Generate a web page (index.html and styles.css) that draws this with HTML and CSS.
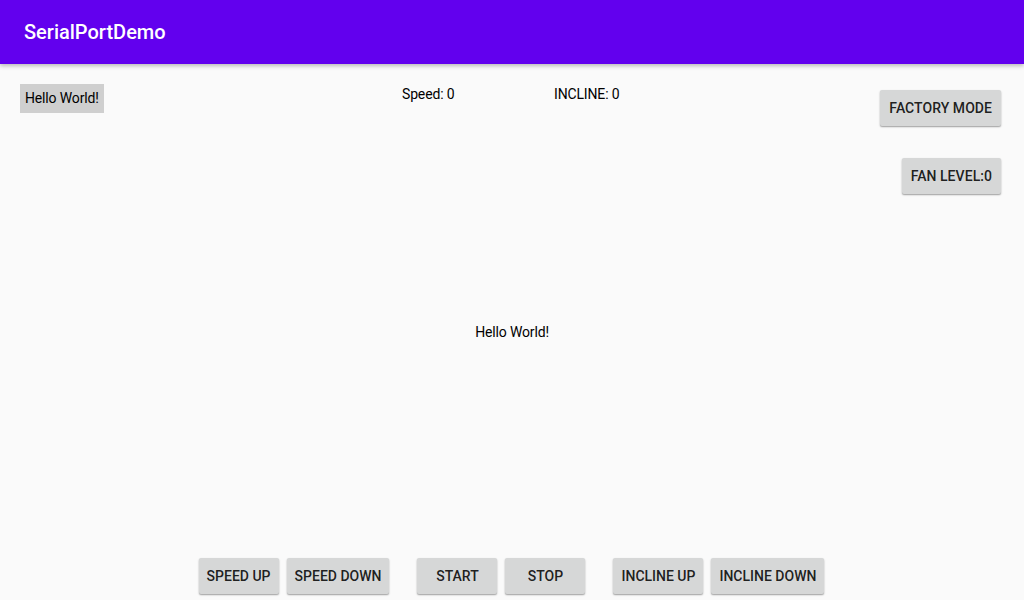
FILE: index.html
```html
<!DOCTYPE html>
<html>
<head>
<meta charset="utf-8">
<link rel="stylesheet" href="styles.css">
</head>
<body>
<header class="toolbar"><span class="title">SerialPortDemo</span></header>
<main class="content">
  <div class="top">
    <div class="hello-box">Hello World!</div>
    <div class="stat">Speed: 0</div>
    <div class="stat">INCLINE: 0</div>
    <div class="side">
      <button class="btn btn-wide">Factory Mode</button>
      <button class="btn btn-wide">Fan Level:0</button>
    </div>
  </div>
  <div class="center-text">Hello World!</div>
  <div class="bottom">
    <div class="group">
      <button class="btn">Speed Up</button>
      <button class="btn">Speed Down</button>
    </div>
    <div class="group">
      <button class="btn">Start</button>
      <button class="btn">Stop</button>
    </div>
    <div class="group">
      <button class="btn">Incline Up</button>
      <button class="btn">Incline Down</button>
    </div>
  </div>
</main>
</body>
</html>
```
FILE: styles.css
```css
* { box-sizing: border-box; }
html, body { margin: 0; padding: 0; }
body {
  width: 1024px;
  height: 600px;
  overflow: hidden;
  background: #fafafa;
  font-family: Roboto, "Liberation Sans", sans-serif;
  font-size: 14px;
  color: #000;
  display: flex;
  flex-direction: column;
}
.toolbar {
  height: 64px;
  flex: none;
  background: #6200ee;
  display: flex;
  align-items: center;
  padding-left: 24px;
  box-shadow: 0 2px 4px rgba(0,0,0,0.25);
  position: relative;
  z-index: 1;
}
.title {
  color: #fff;
  font-size: 20px;
  font-weight: 500;
  line-height: 1;
}
.content {
  flex: 1;
  display: grid;
  grid-template: 1fr / 1fr;
}
.content > * { grid-area: 1 / 1; }
.top {
  align-self: start;
  display: grid;
  grid-template-columns: 382px 152px 1fr auto;
  align-items: start;
  padding: 20px 23px 0 20px;
}
.hello-box,
.stat,
.center-text {
  letter-spacing: -0.15px;
}
.hello-box {
  justify-self: start;
  background: #cfcfcf;
  padding: 5px 5px;
  line-height: 19px;
  height: 29px;
}
.stat {
  line-height: 20px;
}
.side {
  display: flex;
  flex-direction: column;
  align-items: flex-end;
  gap: 32px;
  margin-top: 6px;
}
.btn {
  font-family: Roboto, "Liberation Sans", sans-serif;
  font-size: 14px;
  font-weight: 500;
  text-transform: uppercase;
  color: rgba(0,0,0,0.87);
  background: #d6d7d7;
  border: none;
  border-radius: 2px;
  height: 36px;
  min-width: 80px;
  padding: 0 8px;
  box-shadow: 0 1px 2px rgba(0,0,0,0.28), 0 1px 1px rgba(0,0,0,0.12);
  cursor: pointer;
}
.btn-wide {
  padding: 0 9px;
  letter-spacing: 0.05px;
}
.center-text {
  place-self: center;
  line-height: 20px;
}
.bottom {
  align-self: end;
  justify-self: center;
  display: flex;
  gap: 28px;
  padding-bottom: 6px;
  margin-left: -1px;
}
.group {
  display: flex;
  gap: 8px;
}
```
